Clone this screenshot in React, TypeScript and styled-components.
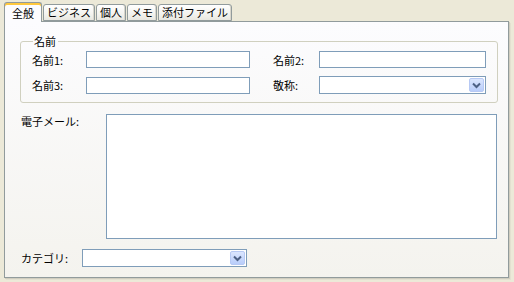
import React from "react";
import styled, { createGlobalStyle } from "styled-components";

const Global = createGlobalStyle`
  html, body { margin: 0; padding: 0; background: #ece9d8; }
  body { font-family: "Noto Sans CJK JP", "Noto Sans", sans-serif; font-size: 11px; color: #000; }
  * { box-sizing: border-box; }
`;

const Root = styled.div`
  width: 514px;
  height: 282px;
  padding: 2px 5px 4px 4px;
  background: #ece9d8;
  display: flex;
  flex-direction: column;
`;

const TabStrip = styled.div`
  display: flex;
  align-items: flex-end;
  height: 19px;
  gap: 1px;
  position: relative;
  z-index: 1;
`;

const Tab = styled.div<{ $active?: boolean }>`
  height: ${(p) => (p.$active ? "20px" : "17px")};
  margin-bottom: ${(p) => (p.$active ? "-1px" : "0")};
  padding: ${(p) => (p.$active ? "1px 7px 0" : "0 3px")};
  display: flex;
  align-items: center;
  font-size: 11px;
  line-height: 1;
  white-space: nowrap;
  border: 1px solid #919b9c;
  border-bottom: ${(p) => (p.$active ? "none" : "1px solid #919b9c")};
  border-radius: 3px 3px 0 0;
  background: ${(p) =>
    p.$active ? "#fcfcfe" : "linear-gradient(#ffffff, #f3f3ef 60%, #e8e7e0)"};
  box-shadow: ${(p) =>
    p.$active ? "inset 0 2px 0 #ffc83c, inset 0 1px 0 #e68b2c" : "inset -1px 0 0 #d8d6cc"};
`;

const Panel = styled.div`
  width: 505px;
  height: 257px;
  border: 1px solid #919b9c;
  background: linear-gradient(#fcfcfe, #f4f3ee);
  box-shadow: 1px 1px 0 #d0cdbf, 2px 2px 0 #e3e0d0;
  padding: 13px 11px 0 15px;
  display: flex;
  flex-direction: column;
`;

const Group = styled.fieldset`
  margin: 0;
  width: 478px;
  padding: 4px 10px 8px 11px;
  border: 1px solid #d0d0bf;
  border-radius: 3px;
  display: grid;
  grid-template-columns: 218px 213px;
  column-gap: 23px;
  row-gap: 8px;
`;

const Legend = styled.legend`
  padding: 0 2px 0 1px;
  margin-left: 1px;
  font-size: 11px;
  line-height: 12px;
  color: #000;
`;

const Field = styled.div<{ $top?: boolean }>`
  display: flex;
  align-items: ${(p) => (p.$top ? "flex-start" : "center")};
`;

const Label = styled.span<{ $w: number; $pt?: number }>`
  width: ${(p) => p.$w}px;
  flex: none;
  font-size: 11px;
  line-height: 12px;
  padding-top: ${(p) => p.$pt ?? 0}px;
  white-space: nowrap;
`;

const TextBox = styled.div<{ $w: number; $h?: number }>`
  width: ${(p) => p.$w}px;
  height: ${(p) => p.$h ?? 17}px;
  border: 1px solid #7f9db9;
  background: #fff;
  flex: none;
`;

const Select = styled.div<{ $w: number }>`
  width: ${(p) => p.$w}px;
  height: 18px;
  border: 1px solid #7f9db9;
  background: #fff;
  flex: none;
  display: flex;
  justify-content: flex-end;
  align-items: center;
  padding-right: 1px;
`;

const DropButton = styled.div`
  width: 15px;
  height: 14px;
  border-radius: 2px;
  background: linear-gradient(#dbe6fe, #b9cdfa);
  border: 1px solid #b7c9f4;
  display: flex;
  align-items: center;
  justify-content: center;
`;

const Row = styled.div<{ $mt: number; $top?: boolean }>`
  display: flex;
  margin-top: ${(p) => p.$mt}px;
  padding-left: 1px;
  align-items: ${(p) => (p.$top ? "flex-start" : "center")};
`;

const Chevron = () => (
  <svg width="9" height="7" viewBox="0 0 9 7">
    <path d="M1 1.5 L4.5 5 L8 1.5" fill="none" stroke="#4d6185" strokeWidth="2" />
  </svg>
);

export default function App() {
  return (
    <>
      <Global />
      <Root>
        <TabStrip>
          <Tab $active>全般</Tab>
          <Tab>ビジネス</Tab>
          <Tab>個人</Tab>
          <Tab>メモ</Tab>
          <Tab>添付ファイル</Tab>
        </TabStrip>
        <Panel>
          <Group>
            <Legend>名前</Legend>
            <Field>
              <Label $w={54}>名前1:</Label>
              <TextBox $w={164} />
            </Field>
            <Field>
              <Label $w={46}>名前2:</Label>
              <TextBox $w={167} />
            </Field>
            <Field>
              <Label $w={54}>名前3:</Label>
              <TextBox $w={164} />
            </Field>
            <Field>
              <Label $w={46}>敬称:</Label>
              <Select $w={167}>
                <DropButton>
                  <Chevron />
                </DropButton>
              </Select>
            </Field>
          </Group>
          <Row $mt={11} $top>
            <Label $w={85} $pt={1}>電子メール:</Label>
            <TextBox $w={391} $h={125} />
          </Row>
          <Row $mt={10}>
            <Label $w={61}>カテゴリ:</Label>
            <Select $w={165}>
              <DropButton>
                <Chevron />
              </DropButton>
            </Select>
          </Row>
        </Panel>
      </Root>
    </>
  );
}
